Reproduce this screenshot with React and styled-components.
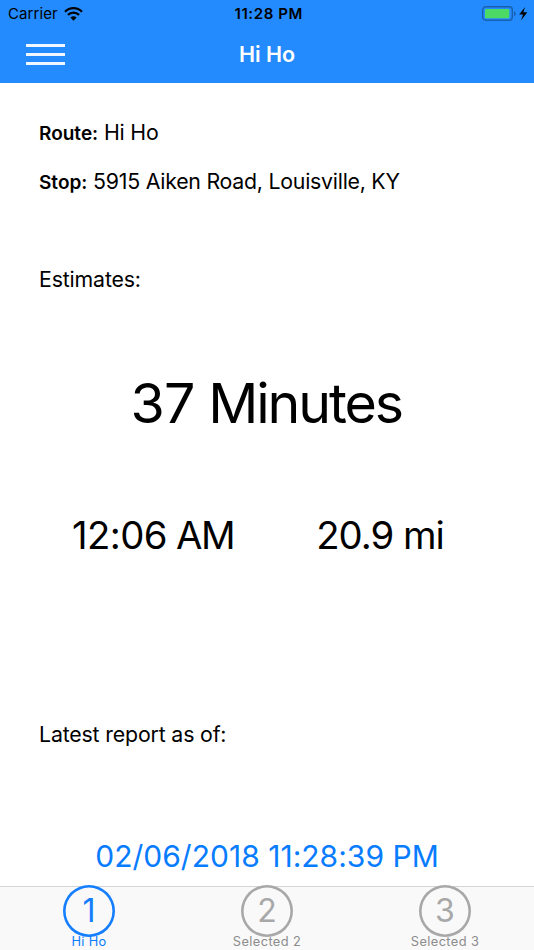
import React from "react";
import styled, { createGlobalStyle } from "styled-components";

const GlobalStyle = createGlobalStyle`
  * { box-sizing: border-box; }
  body { margin: 0; background: #fff; }
`;

const Screen = styled.div`
  display: flex;
  flex-direction: column;
  width: 534px;
  height: 950px;
  overflow: hidden;
  background: #fff;
  color: #000;
  font-family: Inter, "Liberation Sans", sans-serif;
`;

const Header = styled.header`
  height: 83px;
  flex: none;
  background: #248bff;
`;

const StatusBar = styled.div`
  display: grid;
  grid-template-columns: 1fr auto 1fr;
  align-items: center;
  height: 27px;
  padding: 0 6px 0 8px;
  font-size: 15px;
  line-height: 27px;
`;

const Carrier = styled.div`
  display: flex;
  align-items: center;
  gap: 6.5px;
  letter-spacing: 0.08px;
`;

const Clock = styled.div`
  padding-left: 1.5px;
  font-weight: 600;
  letter-spacing: 0.6px;
`;

const Power = styled.div`
  display: flex;
  justify-content: flex-end;
`;

const NavBar = styled.div`
  display: grid;
  grid-template-columns: 1fr auto 1fr;
  height: 56px;
  padding: 0 26px;
`;

const MenuButton = styled.button`
  display: flex;
  flex-direction: column;
  gap: 6px;
  width: 39px;
  margin: 17px 0 0;
  padding: 0;
  border: 0;
  background: none;
`;

const MenuLine = styled.span`
  height: 3px;
  background: #f1f7ff;
`;

const Title = styled.h1`
  margin: 0;
  color: #fff;
  font-size: 21.5px;
  font-weight: 600;
  line-height: 55px;
`;

const Content = styled.main`
  display: flex;
  flex-direction: column;
  flex: 1;
  padding: 0 39px;
`;

const Line = styled.p`
  margin: ${(p) => p.$top}px 0 0;
  font-size: 21.3px;
  line-height: 30px;
  letter-spacing: ${(p) => p.$tracking || 0}px;
  white-space: nowrap;
`;

const Label = styled.strong`
  font-size: 19px;
  font-weight: 600;
  line-height: 0;
  letter-spacing: 0;
`;

const Countdown = styled.div`
  margin-top: 74px;
  font-size: 55.5px;
  line-height: 70px;
  letter-spacing: ${(p) => p.$tracking}px;
  text-align: center;
  text-indent: -1.5px;
  white-space: nowrap;
`;

const Quantity = styled.span`
  letter-spacing: -0.8px;
`;

const Figures = styled.div`
  display: grid;
  grid-template-columns: 1fr 1fr;
  margin-top: 72px;
  line-height: 50px;
  text-align: center;
`;

const Figure = styled.div`
  font-size: 38.3px;
  letter-spacing: ${(p) => p.$tracking}px;
  word-spacing: ${(p) => p.$gap || 0}px;
  text-indent: ${(p) => p.$shift || 0}px;
  white-space: nowrap;
`;

const Clocktime = styled.span`
  letter-spacing: -0.6px;
`;

const Timestamp = styled.div`
  margin-top: 87px;
  color: #087cff;
  font-size: 30px;
  line-height: 40px;
  letter-spacing: 0.02px;
  text-align: center;
  white-space: nowrap;
`;

const TabBar = styled.nav`
  display: grid;
  grid-template-columns: repeat(3, 1fr);
  height: 64px;
  flex: none;
  border-top: 1px solid #d5d5d5;
  background: #f9f9f9;
`;

const Tab = styled.a`
  display: flex;
  flex-direction: column;
  align-items: center;
  margin-top: -2px;
  color: ${(p) => (p.$active ? "#147eff" : "#a8a8a8")};
`;

const Badge = styled.div`
  width: 52px;
  height: 52px;
  flex: none;
  box-shadow: inset 0 0 0 2.6px currentColor;
  border-radius: 50%;
  font-size: 32px;
  font-weight: 400;
  line-height: 52px;
  text-align: center;
`;

const TabLabel = styled.span`
  margin-top: -4px;
  color: ${(p) => (p.$active ? "#087cff" : "#8c8c8c")};
  font-size: 12.8px;
  font-weight: 400;
  line-height: 17px;
  letter-spacing: ${(p) => p.$tracking}px;
`;

const tabs = [
  { number: 1, label: "Hi Ho", active: true, tracking: 0.3 },
  { number: 2, label: "Selected 2", tracking: 0.4 },
  { number: 3, label: "Selected 3", tracking: 0.4 },
];

const WifiIcon = () => (
  <svg width="19" height="14" viewBox="0 0 19 14" fill="none" stroke="#000" strokeWidth="2.2">
    <path d="M1 4.7C5.8-.1 13.2-.1 18 4.7" />
    <path d="M3.9 7.9C7.1 4.8 11.9 4.8 15.1 7.9" />
    <path d="M6.4 10.6Q9.5 7.9 12.6 10.6L9.5 13.7Z" fill="#000" stroke="none" />
  </svg>
);

const BatteryIcon = () => (
  <svg width="46" height="16" viewBox="0 0 46 16">
    <rect x="0.7" y="0.8" width="29.6" height="13.4" rx="3" fill="none" stroke="#1a5fae" strokeWidth="1.4" />
    <rect x="3" y="2.9" width="24.3" height="9.4" rx="1" fill="#4cd964" />
    <path d="M32 4.9Q33.8 5.9 33.8 7.6T32 10.4Z" fill="#1a5fae" />
    <path d="M43 1L37.2 8.6H41L39 14.4L45.3 6.2H41.4Z" fill="#000" />
  </svg>
);

export default function App() {
  return (
    <Screen>
      <GlobalStyle />
      <Header>
        <StatusBar>
          <Carrier>
            Carrier
            <WifiIcon />
          </Carrier>
          <Clock>11:28 PM</Clock>
          <Power>
            <BatteryIcon />
          </Power>
        </StatusBar>
        <NavBar>
          <MenuButton aria-label="Menu">
            <MenuLine />
            <MenuLine />
            <MenuLine />
          </MenuButton>
          <Title>Hi Ho</Title>
        </NavBar>
      </Header>
      <Content>
        <Line $top={34} $tracking={-0.2}>
          <Label>Route:</Label> Hi Ho
        </Line>
        <Line $top={19} $tracking={-0.24}>
          <Label>Stop:</Label> 5915 Aiken Road, Louisville, KY
        </Line>
        <Line $top={68} $tracking={-0.15}>Estimates:</Line>
        <Countdown $tracking={-2.1}>
          <Quantity>37</Quantity> Minutes
        </Countdown>
        <Figures>
          <Figure $tracking={-1.6}>
            <Clocktime>12:06</Clocktime> AM
          </Figure>
          <Figure $tracking={-1} $shift={-2}>20.9 mi</Figure>
        </Figures>
        <Line $top={159} $tracking={-0.16}>Latest report as of:</Line>
        <Timestamp>02/06/2018 11:28:39 PM</Timestamp>
      </Content>
      <TabBar>
        {tabs.map((tab) => (
          <Tab key={tab.number} $active={tab.active}>
            <Badge>{tab.number}</Badge>
            <TabLabel $active={tab.active} $tracking={tab.tracking}>
              {tab.label}
            </TabLabel>
          </Tab>
        ))}
      </TabBar>
    </Screen>
  );
}
